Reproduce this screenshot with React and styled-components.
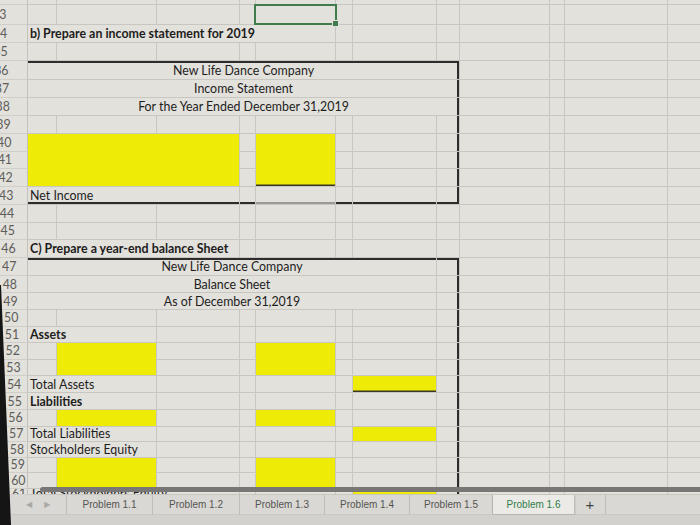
import React from "react";
import styled, { createGlobalStyle } from "styled-components";

const GlobalStyle = createGlobalStyle`
  html, body {
    margin: 0;
    padding: 0;
    background: #e2e1dc;
  }
  body {
    font-family: Lato, "Open Sans", sans-serif;
  }
`;

// row number and its height in px (the photo gets denser towards the bottom)
const ROWS = [
  [32, 5], [33, 20], [34, 18], [35, 18], [36, 19], [37, 18], [38, 18],
  [39, 18], [40, 17.5], [41, 17.5], [42, 18], [43, 18], [44, 17.5],
  [45, 17.5], [46, 18], [47, 18], [48, 17], [49, 17], [50, 16.5],
  [51, 16.5], [52, 16.5], [53, 16.5], [54, 17], [55, 17], [56, 16.5],
  [57, 15.5], [58, 15.5], [59, 15.5], [60, 15.5], [61, 6.5],
];
const LAST = ROWS.length - 1;

const COLS = 12; // A..L

const spec = {};
const put = (row, col, o) => {
  spec[`${row}:${col}`] = { cs: 1, rs: 1, ...(spec[`${row}:${col}`] || {}), ...o };
};

// b) income statement
put(33, 5, { select: true });
put(34, 1, { cs: 5, text: "b) Prepare an income statement for 2019", bold: true });
put(36, 1, { cs: 8, text: "New Life Dance Company", center: true, t: true, r: true });
put(37, 1, { cs: 8, text: "Income Statement", center: true, r: true });
put(38, 1, { cs: 8, text: "For the Year Ended December 31,2019", center: true, r: true });
for (let r = 39; r <= 43; r++) put(r, 8, { r: true });
put(40, 1, { cs: 3, rs: 3, fill: true });
put(40, 5, { rs: 3, fill: true, ub: true });
put(43, 1, { cs: 3, text: "Net Income", b: true });
put(43, 4, { b: true });
put(43, 5, { lb: true });
put(43, 6, { b: true });
put(43, 7, { b: true });
put(43, 8, { b: true });

// c) balance sheet
put(46, 1, { cs: 3, text: "C) Prepare a year-end balance Sheet", bold: true });
put(47, 1, { cs: 7, text: "New Life Dance Company", center: true, t: true });
put(48, 1, { cs: 7, text: "Balance Sheet", center: true });
put(49, 1, { cs: 7, text: "As of December 31,2019", center: true });
put(47, 8, { t: true });
for (let r = 47; r <= 61; r++) put(r, 8, { r: true });
put(51, 1, { cs: 2, text: "Assets", bold: true });
put(52, 2, { rs: 2, fill: true });
put(52, 5, { rs: 2, fill: true });
put(54, 1, { cs: 2, text: "Total Assets" });
put(54, 7, { fill: true, ub: true });
put(55, 1, { cs: 2, text: "Liabilities", bold: true });
put(56, 2, { fill: true });
put(56, 5, { fill: true });
put(57, 1, { cs: 2, text: "Total Liabilities" });
put(57, 7, { fill: true });
put(58, 1, { cs: 2, text: "Stockholders Equity" });
put(59, 2, { rs: 2, fill: true });
put(59, 5, { rs: 2, fill: true });
put(61, 1, { cs: 3, text: "Total Stockholders Equity", cut: true });
put(61, 7, { fill: true });

const buildCells = () => {
  const covered = new Set();
  const out = [];
  ROWS.forEach(([num], ri) => {
    for (let c = 1; c <= COLS; c++) {
      const key = `${num}:${c}`;
      if (covered.has(key)) continue;
      const s = spec[key] || { cs: 1, rs: 1 };
      for (let dr = 0; dr < s.rs; dr++) {
        for (let dc = 0; dc < s.cs; dc++) {
          covered.add(`${ROWS[ri + dr][0]}:${c + dc}`);
        }
      }
      out.push({ key, ri, c, ...s });
    }
  });
  return out;
};

const TABS = [
  { name: "Problem 1.1", w: 86 },
  { name: "Problem 1.2", w: 87 },
  { name: "Problem 1.3", w: 85 },
  { name: "Problem 1.4", w: 85 },
  { name: "Problem 1.5", w: 83 },
  { name: "Problem 1.6", w: 82, active: true },
];

const App = () => {
  const cells = buildCells();
  return (
    <Page>
      <GlobalStyle />
      <Sheet>
        <Grid>
          {ROWS.map(([num], ri) => (
            <RowHead key={`h${num}`} $row={ri + 1} $cut={ri === LAST}>
              {ri > 0 && <RowNum $shift={-8 + (ri - 1) * 0.71}>{num}</RowNum>}
            </RowHead>
          ))}
          {cells.map((cell) => (
            <Cell
              key={cell.key}
              $row={cell.ri + 1}
              $col={cell.c + 1}
              $rs={cell.rs}
              $cs={cell.cs}
              $fill={cell.fill}
              $center={cell.center}
              $bold={cell.bold}
              $cut={cell.cut}
              $open={cell.select}
              $t={cell.t}
              $r={cell.r}
              $b={cell.b}
              $lb={cell.lb}
              $ub={cell.ub}
            >
              {cell.text}
              {cell.select && (
                <Selection>
                  <Handle />
                </Selection>
              )}
            </Cell>
          ))}
        </Grid>
        <ScrollThumb />
      </Sheet>
      <TabBar>
        <Arrows>
          <Arrow>◀</Arrow>
          <Arrow>▶</Arrow>
        </Arrows>
        {TABS.map((t) => (
          <Tab key={t.name} $w={t.w} $active={t.active}>
            {t.name}
          </Tab>
        ))}
        <AddTab>+</AddTab>
      </TabBar>
      <Footer />
      <Bezel />
    </Page>
  );
};

export default App;

const edges = (p) => {
  const s = [];
  if (p.$t) s.push("inset 0 2px 0 #2f2a2c");
  if (p.$r) s.push("inset -2px 0 0 #2f2a2c");
  if (p.$b) s.push("inset 0 -2px 0 #2f2a2c");
  if (p.$lb) s.push("inset 0 -2px 0 #9a9995");
  if (p.$ub) s.push("inset 0 -1.5px 0 #3a3525");
  return s.length ? `box-shadow: ${s.join(", ")};` : "";
};

// a row cut by the bottom of the window: only the tops of its letters show
const cutRow = (p) =>
  p.$cut
    ? `
  align-items: flex-start;
  padding-top: 3px;
  line-height: 3px;
`
    : "";

const Page = styled.div`
  position: relative;
  display: flex;
  flex-direction: column;
  width: 700px;
  height: 525px;
  overflow: hidden;
  background: #e2e1dc;
`;

const Sheet = styled.div`
  position: relative;
  height: 495px;
  flex-shrink: 0;
  overflow: hidden;
`;

const Grid = styled.div`
  display: grid;
  grid-template-columns: 28px 29px 100px 83px 16px 80px 17px 84px 23px 90px 15px 103px 40px;
  grid-template-rows: ${ROWS.map(([, h]) => `${h}px`).join(" ")};
`;

const RowHead = styled.div`
  grid-row: ${(p) => p.$row};
  grid-column: 1;
  display: flex;
  align-items: center;
  overflow: hidden;
  border-right: 1px solid #c2c1bc;
  border-bottom: 1px solid #cfcec9;
  box-sizing: border-box;
  ${cutRow}
`;

const RowNum = styled.span`
  display: block;
  font-size: 12.4px;
  color: #5e5d5a;
  white-space: nowrap;
  transform: translateX(${(p) => p.$shift}px);
`;

const Cell = styled.div`
  position: relative;
  z-index: ${(p) => (p.$open ? 2 : "auto")};
  grid-row: ${(p) => `${p.$row} / span ${p.$rs}`};
  grid-column: ${(p) => `${p.$col} / span ${p.$cs}`};
  display: flex;
  align-items: center;
  justify-content: ${(p) => (p.$center ? "center" : "flex-start")};
  padding: 0 2px;
  box-sizing: border-box;
  min-width: 0;
  border-right: 1px solid #c7c6c1;
  border-bottom: 1px solid #c7c6c1;
  background: ${(p) => (p.$fill ? "#eeeb06" : "transparent")};
  font-size: 12.4px;
  font-weight: ${(p) => (p.$bold ? 700 : 400)};
  color: #1e1d1c;
  white-space: nowrap;
  overflow: ${(p) => (p.$center || p.$open ? "visible" : "hidden")};
  ${edges}
  ${cutRow}
`;

const Selection = styled.div`
  position: absolute;
  inset: -1px -2px -1px -2px;
  border: 2px solid #3f7b4b;
`;

const Handle = styled.div`
  position: absolute;
  right: -4px;
  bottom: -4px;
  width: 5px;
  height: 5px;
  background: #3f7b4b;
  border: 1px solid #e2e1dc;
`;

const ScrollThumb = styled.div`
  position: absolute;
  left: 40px;
  right: 0;
  top: 487px;
  height: 5px;
  border-radius: 3px 0 0 3px;
  background: #787775;
`;

const TabBar = styled.div`
  display: flex;
  align-items: stretch;
  height: 19px;
  flex-shrink: 0;
  background: #d9d8d4;
  border-bottom: 1px solid #c9c8c4;
  font-family: "Liberation Sans", Arial, sans-serif;
`;

const Arrows = styled.div`
  display: flex;
  align-items: center;
  gap: 12px;
  width: 67px;
  box-sizing: border-box;
  padding-left: 26px;
  border-right: 1px solid #bdbcb8;
`;

const Arrow = styled.span`
  font-family: "DejaVu Sans", sans-serif;
  font-size: 8px;
  color: #a9a8a4;
`;

const Tab = styled.div`
  display: flex;
  align-items: center;
  justify-content: center;
  width: ${(p) => p.$w}px;
  box-sizing: border-box;
  border-right: 1px solid #bdbcb8;
  background: ${(p) => (p.$active ? "#ebeae6" : "transparent")};
  box-shadow: ${(p) => (p.$active ? "0 1px 2px rgba(0,0,0,0.15)" : "none")};
  font-size: 10px;
  color: ${(p) => (p.$active ? "#2f7d48" : "#555452")};
`;

const AddTab = styled.div`
  display: flex;
  align-items: center;
  justify-content: center;
  width: 30px;
  border-right: 1px solid #bdbcb8;
  font-size: 15px;
  color: #444;
`;

const Footer = styled.div`
  flex: 1;
  background: #d2d1cd;
`;

const Bezel = styled.div`
  position: absolute;
  left: 0;
  top: 0;
  width: 14px;
  height: 525px;
  background: #161516;
  clip-path: polygon(0 285px, 1px 285px, 11px 525px, 0 525px);
`;
